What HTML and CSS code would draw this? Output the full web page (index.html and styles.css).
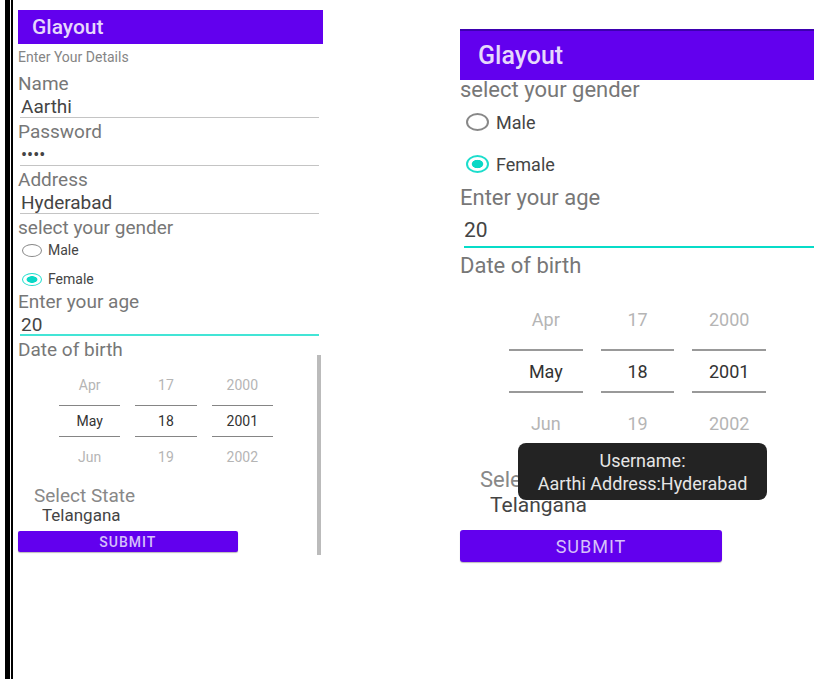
FILE: index.html
```html
<!DOCTYPE html>
<html lang="en">
<head>
<meta charset="utf-8">
<meta name="viewport" content="width=device-width, initial-scale=1">
<title>Glayout</title>
<link rel="stylesheet" href="styles.css">
</head>
<body>
<div class="page">
<main class="sheet">
  <section class="screen small">
    <header class="appbar"><h1>Glayout</h1></header>
    <form class="form">
      <p class="intro">Enter Your Details</p>
      <label class="caption" for="name">Name</label>
      <input class="field" id="name" type="text" value="Aarthi">
      <label class="caption" for="password">Password</label>
      <input class="field secret" id="password" type="password" value="1234">
      <label class="caption" for="address">Address</label>
      <input class="field" id="address" type="text" value="Hyderabad">
      <fieldset class="group">
        <legend class="caption">select your gender</legend>
        <div class="options">
          <label class="option"><input class="radio" type="radio" name="gender-a">Male</label>
          <label class="option"><input class="radio" type="radio" name="gender-a" checked>Female</label>
        </div>
      </fieldset>
      <label class="caption" for="age-a">Enter your age</label>
      <input class="field active" id="age-a" type="text" value="20">
      <fieldset class="group">
        <legend class="caption">Date of birth</legend>
        <div class="picker">
          <div class="wheel"><button type="button">Apr</button><input type="text" value="May" aria-label="Month"><button type="button">Jun</button></div>
          <div class="wheel"><button type="button">17</button><input type="text" value="18" aria-label="Day"><button type="button">19</button></div>
          <div class="wheel"><button type="button">2000</button><input type="text" value="2001" aria-label="Year"><button type="button">2002</button></div>
        </div>
      </fieldset>
      <label class="state-label" for="state-a">Select State</label>
      <select class="state" id="state-a"><option>Telangana</option></select>
      <button class="submit" type="button">SUBMIT</button>
    </form>
    <div class="scrollbar"></div>
  </section>

  <section class="screen large">
    <header class="appbar"><h1>Glayout</h1></header>
    <form class="form">
      <fieldset class="group">
        <legend class="caption">select your gender</legend>
        <div class="options">
          <label class="option"><input class="radio" type="radio" name="gender-b">Male</label>
          <label class="option"><input class="radio" type="radio" name="gender-b" checked>Female</label>
        </div>
      </fieldset>
      <label class="caption" for="age-b">Enter your age</label>
      <input class="field active" id="age-b" type="text" value="20">
      <fieldset class="group">
        <legend class="caption">Date of birth</legend>
        <div class="picker">
          <div class="wheel"><button type="button">Apr</button><input type="text" value="May" aria-label="Month"><button type="button">Jun</button></div>
          <div class="wheel"><button type="button">17</button><input type="text" value="18" aria-label="Day"><button type="button">19</button></div>
          <div class="wheel"><button type="button">2000</button><input type="text" value="2001" aria-label="Year"><button type="button">2002</button></div>
        </div>
      </fieldset>
      <label class="state-label" for="state-b">Select State</label>
      <select class="state" id="state-b"><option>Telangana</option></select>
      <button class="submit" type="button">SUBMIT</button>
    </form>
    <div class="toast" role="status">Username:<br>Aarthi Address:Hyderabad</div>
  </section>
</main>
</div>
</body>
</html>
```

FILE: styles.css
```css
* {
  box-sizing: border-box;
}

body {
  margin: 0;
  background: #fff;
  color: #444;
  font-family: Roboto, "Liberation Sans", sans-serif;
}

/* Thick and thin page rules down the left edge */
.page {
  margin-left: 5px;
  padding-left: 1px;
  border-left: 5px solid #000;
}

.sheet {
  display: grid;
  grid-template-columns: 305fr 354fr;
  column-gap: 137px;
  align-items: start;
  min-height: 100vh;
  padding: 10px 14px 0 5px;
  border-left: 2px solid #000;
}

.screen {
  position: relative;
}

.small {
  --caption-size: 18px;
  --caption-height: 24px;
  --field-size: 18px;
  --field-height: 22px;
  --field-gap: 2px;
  --wheel-size: 14px;
  --wheel-row: 40px;
  --wheel-middle: 32px;
  --radio-width: 20px;
  --radio-height: 13px;
  --option-size: 14px;
  --option-height: 20px;
  --option-gap: 9px;
}

.large {
  --caption-size: 22px;
  --caption-height: 30px;
  --field-size: 21px;
  --field-height: 35px;
  --field-gap: 3px;
  --wheel-size: 18px;
  --wheel-row: 60px;
  --wheel-middle: 44px;
  --radio-width: 23px;
  --radio-height: 18px;
  --option-size: 18px;
  --option-height: 24px;
  --option-gap: 18px;
  margin-top: 19px;
}

.appbar {
  display: flex;
  align-items: center;
  height: 34px;
  padding-left: 14px;
  background: #6200ee;
  color: #e6d8fc;
}

.appbar h1 {
  margin: 0;
  font-size: 21px;
  font-weight: 500;
}

.large .appbar {
  height: 51px;
  padding-left: 18px;
  border-top: 2px solid #3d00b0;
}

.large .appbar h1 {
  font-size: 25px;
}

.form {
  display: flex;
  flex-direction: column;
}

.intro {
  margin: 0 0 5px;
  padding-top: 3px;
  font-size: 14px;
  line-height: 20px;
  color: #858585;
}

.caption {
  display: block;
  padding: 0;
  font-size: var(--caption-size);
  line-height: var(--caption-height);
  color: #777;
}

.small .caption,
.small .field,
.small .state-label {
  font-size: 19px;
}

.field {
  height: var(--field-height);
  margin: 0 4px var(--field-gap) 2px;
  padding: 0 1px;
  border: 0;
  border-bottom: 1px solid #c4c4c4;
  border-radius: 0;
  background: transparent;
  color: #444;
  font: var(--field-size) Roboto, "Liberation Sans", sans-serif;
  outline: 0;
}

.field.active {
  border-bottom: 2px solid #43e5d6;
}

.small .secret {
  font-size: 18px;
}

.large .field {
  margin-left: 4px;
  margin-right: 0;
  padding-left: 0;
  border-bottom-color: #06dcc8;
}

.group {
  min-width: 0;
  margin: 0;
  padding: 0;
  border: 0;
}

.large .group:first-child .caption {
  line-height: 20px;
}

.options {
  display: flex;
  flex-direction: column;
  gap: var(--option-gap);
  padding: 0 0 1px 4px;
}

.large .options {
  padding: 10px 0 7px 6px;
}

.option {
  display: flex;
  align-items: center;
  gap: 6px;
  height: var(--option-height);
  font-size: var(--option-size);
}

.large .option {
  gap: 7px;
}

.radio {
  appearance: none;
  width: var(--radio-width);
  height: var(--radio-height);
  margin: 0;
  border: 2px solid #888;
  border-radius: 50%;
}

.small .radio {
  border-width: 1px;
}

.radio:checked {
  border-color: #1cddcc;
  background: radial-gradient(closest-side, #0ad8c6 55%, transparent 65%);
}

.picker {
  display: grid;
  grid-template-columns: repeat(3, 1fr);
  column-gap: 15px;
  padding: 3px 50px 9px 41px;
}

.large .picker {
  column-gap: 18px;
  padding: 8px 48px 15px 49px;
}

.wheel {
  display: flex;
  flex-direction: column;
}

.wheel button,
.wheel input {
  width: 100%;
  min-width: 0;
  padding: 0;
  border: 0;
  border-radius: 0;
  background: transparent;
  font: var(--wheel-size) Roboto, "Liberation Sans", sans-serif;
  text-align: center;
}

.wheel button {
  height: var(--wheel-row);
  color: #b5b5b5;
}

.wheel input {
  height: var(--wheel-middle);
  border-top: 1px solid #858585;
  border-bottom: 1px solid #858585;
  color: #333;
}

.large .wheel input {
  border-width: 2px 0;
  border-color: #999;
}

.state-label {
  padding-left: 16px;
  line-height: 20px;
  color: #888;
}

.state {
  appearance: none;
  align-self: flex-start;
  height: 18px;
  margin: 0 0 7px 24px;
  padding: 0;
  border: 0;
  background: transparent;
  color: #444;
  font: 17px/18px Roboto, "Liberation Sans", sans-serif;
}

.large .state-label {
  padding-left: 20px;
  font-size: 22px;
  line-height: 24px;
}

.large .state {
  height: 24px;
  margin: 1px 0 13px 30px;
  font-size: 21px;
  line-height: 24px;
}

.submit {
  width: 72%;
  height: 21px;
  padding: 0;
  border: 0;
  border-radius: 2px;
  background: #6200ee;
  box-shadow: 0 1px 1px #bbb;
  color: #d6c0fa;
  font: 500 14px Roboto, "Liberation Sans", sans-serif;
  letter-spacing: 1px;
}

.large .submit {
  width: 74%;
  height: 32px;
  border-radius: 3px;
  font-size: 18px;
  font-weight: 400;
}

.scrollbar {
  position: absolute;
  right: 2px;
  bottom: -3px;
  width: 4px;
  height: 200px;
  background: #bbb;
}

.toast {
  position: absolute;
  right: 47px;
  bottom: 62px;
  left: 58px;
  padding: 6px 0 5px;
  border-radius: 8px;
  background: #232323;
  color: #e6e6e6;
  font-size: 18px;
  line-height: 23px;
  text-align: center;
}
```
